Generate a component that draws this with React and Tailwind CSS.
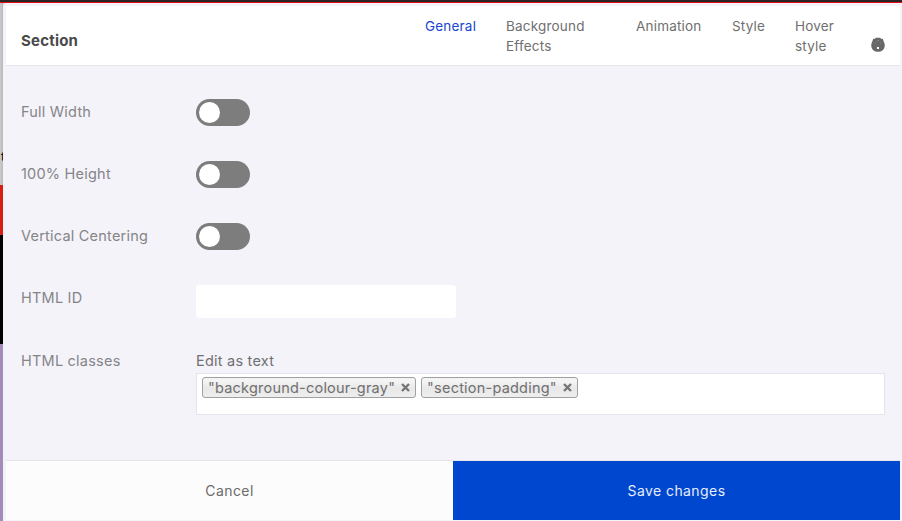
import React from 'react';

function Toggle() {
  return (
    <button type="button" className="flex h-[27px] w-[54px] items-center rounded-full bg-[#7d7d7d] px-[3px]">
      <span className="size-[21px] rounded-full bg-white" />
    </button>
  );
}

function Row({ label, children }) {
  return (
    <div className="flex h-[62px] items-center">
      <span className="w-[175px] shrink-0 text-[#858588]">{label}</span>
      {children}
    </div>
  );
}

function Tag({ children }) {
  return (
    <span className="flex h-[21px] items-center gap-[6px] rounded-[3px] border border-[#a0a0a0] bg-linear-to-b from-[#f4f4f4] from-20% via-[#e8e8e8] via-52% to-[#eeeeee] pr-[5px] pl-[5px] text-[#707070]">
      <span className="leading-[19px]">{children}</span>
      <svg className="size-[9px]" viewBox="0 0 9 9" stroke="#747474" strokeWidth="2.3">
        <path d="M1 1 8 8M8 1 1 8" />
      </svg>
    </span>
  );
}

const tabs = [
  { name: 'General', style: 'w-[81px] text-[#1746cf]' },
  { name: 'Background Effects', style: 'w-[130px] pr-10' },
  { name: 'Animation', style: 'w-[96px]' },
  { name: 'Style', style: 'w-[63px]' },
  { name: 'Hover style', style: 'w-[76px] pr-8' },
];

export default function App() {
  return (
    <div className="flex h-[521px] w-[902px] flex-col overflow-hidden bg-[#c4c4c4] font-['Inter',sans-serif] text-[14px]">
      <div className="h-[3px] shrink-0 border-b border-[#e60b12] bg-[#262424]" />
      <div className="flex min-h-0 flex-1">
        <div className="flex w-[3px] shrink-0 flex-col overflow-hidden">
          <div className="flex h-[182px] items-end justify-start bg-linear-to-r from-[#cbcbcb] to-[#b9b9b9] pb-[20px] pl-px text-[12px] leading-[16px] text-black">t</div>
          <div className="h-[50px] bg-[#d71e12]" />
          <div className="h-[109px] bg-black" />
          <div className="flex-1 bg-[#a68bb8]" />
        </div>
        <div className="flex flex-1 flex-col rounded-tl-[3px] bg-[#f4f3f9] pt-[3px] pr-[2px] pb-px pl-[3px]">
          <header className="flex h-[60px] shrink-0 border-b border-[#e6e5eb] bg-white pl-[15px]">
            <h1 className="w-[404px] pt-[25px] text-[15px] leading-5 font-bold tracking-[0.2px] text-[#4a4a4a]">Section</h1>
            <nav className="flex pt-[10px] text-[13.5px] leading-5 tracking-[0.2px] text-[#6f6f6f]">
              {tabs.map((tab) => (
                <a key={tab.name} className={tab.style}>{tab.name}</a>
              ))}
            </nav>
            <svg className="mt-[31px] h-[15px] w-[14px]" viewBox="0 0 14 15">
              <path d="M2.2 1.7 3.4 1.9 5 .8H9l1.6 1.1L11.8 1.7l.8 2.5C14.4 7 14.2 10.8 11.6 13.2 9 15.2 5 15.2 2.4 13.2-.2 10.8-.4 7 1.4 4.2Z" fill="#686868" />
              <path d="M6 10h2v2H6Z" fill="#fff" />
              <path d="M6 3.5h2M4 6h1M9 6h1" stroke="#858585" />
            </svg>
          </header>
          <main className="flex h-[394px] shrink-0 flex-col pt-[15px] pl-[15px] text-[14.5px] tracking-[0.22px]">
            <Row label="Full Width"><Toggle /></Row>
            <Row label="100% Height"><Toggle /></Row>
            <Row label="Vertical Centering"><Toggle /></Row>
            <div className="flex h-[62px] pt-[18px]">
              <label className="w-[175px] pt-[3px] leading-5 text-[#858588]">HTML ID</label>
              <input aria-label="HTML ID" className="h-[33px] w-[260px] rounded-[3px] bg-white" />
            </div>
            <div className="flex pt-[22px]">
              <span className="w-[175px] shrink-0 leading-5 text-[#858588]">HTML classes</span>
              <div className="w-[689px]">
                <div className="h-[22px] leading-5 text-[#707070]">Edit as text</div>
                <div className="flex h-[42px] gap-[5px] border border-[#e5e4ea] bg-white pt-[3px] pl-[5px]">
                  <Tag>"background-colour-gray"</Tag>
                  <Tag>"section-padding"</Tag>
                </div>
              </div>
            </div>
          </main>
          <footer className="flex min-h-0 flex-1 border-t border-[#e6e5eb] tracking-[0.42px]">
            <button type="button" className="w-[447px] bg-[#fcfcfc] text-[#6b6b6b]">Cancel</button>
            <button type="button" className="flex-1 bg-[#0047cf] text-[#e6edfb]">Save changes</button>
          </footer>
        </div>
      </div>
    </div>
  );
}
